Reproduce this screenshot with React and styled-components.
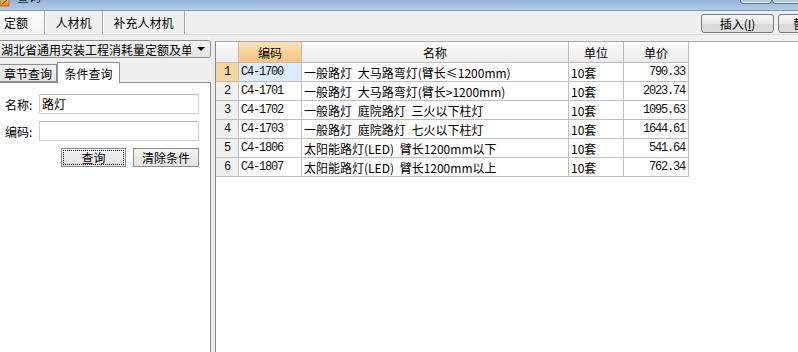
import React from "react";
import styled, { createGlobalStyle } from "styled-components";

const Global = createGlobalStyle`
  html, body { margin: 0; padding: 0; background: #f0f0f0; }
  body { font-family: "Noto Sans CJK SC", "Liberation Sans", sans-serif; font-size: 12px; color: #000; }
`;

const Window = styled.div`
  width: 798px;
  height: 352px;
  overflow: hidden;
  background: #f0f0f0;
  display: flex;
  flex-direction: column;
`;

const TitleBar = styled.div`
  height: 10px;
  flex: none;
  display: flex;
  align-items: flex-start;
  overflow: hidden;
  background: linear-gradient(to bottom, #93b1d6, #b7cde8);
  border-bottom: 1px solid #7b98bf;
`;

const TitleIcon = styled.svg`
  width: 10px;
  height: 7px;
  flex: none;
`;

const TitleText = styled.span`
  margin-left: 7px;
  margin-top: -10px;
  font-size: 12px;
  line-height: 14px;
  color: #1b2a40;
`;

const WinButtons = styled.div`
  margin-left: auto;
  margin-right: -10px;
  display: flex;
`;

const WinButton = styled.div`
  width: ${(p) => p.$w}px;
  height: 3px;
  border: 1px solid #5f7797;
  border-top: none;
  border-radius: 0 0 4px 4px;
  background: linear-gradient(to bottom, #a9c2e2, #c9daee);
  box-shadow: inset 0 -1px 0 rgba(255,255,255,0.6);
`;

const TopBar = styled.div`
  height: 23px;
  flex: none;
  display: flex;
  align-items: stretch;
  border-bottom: 1px solid #dadada;
`;

const Tab = styled.div`
  display: flex;
  align-items: center;
  justify-content: ${(p) => (p.$first ? "flex-start" : "center")};
  width: ${(p) => p.$w}px;
  box-sizing: border-box;
  padding-left: ${(p) => (p.$first ? "4px" : "0")};
  font-size: 12px;
  background: ${(p) => (p.$active ? "linear-gradient(#fdfdfd, #f3f3f3)" : "transparent")};
  border-right: 1px solid #a7a7a7;
  box-shadow: 1px 0 0 #ffffff;
`;

const ToolButtons = styled.div`
  margin-left: auto;
  display: flex;
  align-items: center;
  gap: 4px;
  margin-right: -60px;
  padding-top: 2px;
`;

const ToolButton = styled.button`
  width: ${(p) => p.$w}px;
  height: 19px;
  padding: 0;
  box-sizing: border-box;
  border: 1px solid #7a7a7a;
  border-radius: 3px;
  background: linear-gradient(to bottom, #f6f6f6 0%, #e8e8e8 50%, #d9d9d9 51%, #dedede 100%);
  font-family: "Noto Sans CJK SC", sans-serif;
  font-size: 12px;
  color: #000;
  text-align: ${(p) => (p.$left ? "left" : "center")};
  padding-left: ${(p) => (p.$left ? "14px" : "0")};
`;

const Body = styled.div`
  flex: 1;
  display: flex;
  min-height: 0;
`;

const LeftPane = styled.div`
  width: 211px;
  flex: none;
  display: flex;
  flex-direction: column;
  padding-top: 5px;
  box-sizing: border-box;
`;

const Dropdown = styled.div`
  height: 18px;
  box-sizing: border-box;
  margin-left: -3px;
  border: 1px solid #8e8e8e;
  border-radius: 3px;
  background: linear-gradient(to bottom, #f4f4f4, #e4e4e4);
  display: flex;
  align-items: center;
  padding-left: 3px;
  padding-right: 5px;
  font-size: 12px;
  white-space: nowrap;
`;

const DropText = styled.span`
  flex: 1;
  overflow: hidden;
`;

const Arrow = styled.span`
  width: 0;
  height: 0;
  border-left: 4px solid transparent;
  border-right: 4px solid transparent;
  border-top: 4px solid #000;
  margin-left: 6px;
`;

const SubTabs = styled.div`
  margin-top: 4px;
  height: 20px;
  display: flex;
  align-items: flex-end;
  position: relative;
  z-index: 1;
`;

const SubTab = styled.div`
  width: ${(p) => p.$w}px;
  height: ${(p) => (p.$active ? 21 : 18)}px;
  box-sizing: border-box;
  display: flex;
  align-items: center;
  justify-content: center;
  font-size: 12px;
  border: 1px solid #8f8f8f;
  border-bottom: ${(p) => (p.$active ? "none" : "1px solid #8f8f8f")};
  border-left: ${(p) => (p.$first ? "none" : "1px solid #8f8f8f")};
  margin-bottom: ${(p) => (p.$active ? "-1px" : "0")};
  background: ${(p) => (p.$active ? "#ffffff" : "linear-gradient(#f2f2f2, #e3e3e3)")};
`;

const Panel = styled.div`
  flex: 1;
  background: #ffffff;
  border-top: 1px solid #8f8f8f;
  border-right: 1px solid #8a8a8a;
  box-sizing: border-box;
  display: flex;
  flex-direction: column;
  gap: 7px;
  padding: 11px 11px 0 0;
`;

const FormRow = styled.div`
  display: flex;
  align-items: center;
  height: 20px;
`;

const Label = styled.span`
  width: 39px;
  flex: none;
  box-sizing: border-box;
  padding-left: 5px;
  font-size: 12px;
`;

const Input = styled.div`
  flex: 1;
  height: 20px;
  box-sizing: border-box;
  border: 1px solid #cfcfcf;
  border-top-color: #b8b8b8;
  background: #fff;
  font-size: 12px;
  line-height: 18px;
  padding-left: 2px;
`;

const ButtonRow = styled.div`
  display: flex;
  justify-content: flex-end;
  gap: 7px;
`;

const FormButton = styled.div`
  width: ${(p) => p.$w}px;
  height: 19px;
  box-sizing: border-box;
  border: 1px solid #8d8d8d;
  background: linear-gradient(to bottom, #f5f5f5, #e2e2e2);
  display: flex;
  align-items: center;
  justify-content: center;
  font-size: 12px;
  outline: ${(p) => (p.$focus ? "1px dotted #000" : "none")};
  outline-offset: -3px;
`;

const Splitter = styled.div`
  width: 4px;
  flex: none;
  background: #ececec;
`;

const GridArea = styled.div`
  flex: 1;
  margin-top: 6px;
  background: #ffffff;
  border-left: 1px solid #8a8a8a;
  border-top: 1px solid #a9a9a9;
`;

const cols = "23px 63px 267px 55px 65px";

const GridRow = styled.div`
  display: grid;
  grid-template-columns: ${cols};
  height: ${(p) => (p.$header ? 21 : 19)}px;
  width: 473px;
`;

const Cell = styled.div`
  box-sizing: border-box;
  border-right: 1px solid #bdbdbd;
  border-bottom: 1px solid #bdbdbd;
  display: flex;
  align-items: center;
  justify-content: ${(p) => p.$align || "flex-start"};
  padding: 0 ${(p) => (p.$align === "flex-end" ? "3px" : "0")} 0 ${(p) => (p.$align ? "0" : "2px")};
  font-size: 12px;
  white-space: pre;
  word-spacing: 3px;
  overflow: hidden;
  background: ${(p) => p.$bg || "#ffffff"};
`;

const HeadCell = styled(Cell)`
  justify-content: center;
  padding: 0;
  background: ${(p) =>
    p.$hot
      ? "linear-gradient(to bottom, #fde3b5, #f6c47e)"
      : "linear-gradient(to bottom, #fbfbfb, #ececec)"};
`;

const Mono = styled.span`
  font-family: "Liberation Mono", "DejaVu Sans Mono", monospace;
  font-size: 12px;
  letter-spacing: -1.2px;
  color: #111;
`;

const rows = [
  ["C4-1700", "一般路灯 大马路弯灯(臂长≤1200mm)", "10套", "790.33"],
  ["C4-1701", "一般路灯 大马路弯灯(臂长>1200mm)", "10套", "2023.74"],
  ["C4-1702", "一般路灯 庭院路灯 三火以下柱灯", "10套", "1095.63"],
  ["C4-1703", "一般路灯 庭院路灯 七火以下柱灯", "10套", "1644.61"],
  ["C4-1806", "太阳能路灯(LED) 臂长1200mm以下", "10套", "541.64"],
  ["C4-1807", "太阳能路灯(LED) 臂长1200mm以上", "10套", "762.34"],
];

export default function App() {
  return (
    <Window>
      <Global />
      <TitleBar>
        <TitleIcon viewBox="0 0 10 7">
          <defs>
            <linearGradient id="ti" x1="0" y1="0" x2="0" y2="1">
              <stop offset="0" stopColor="#f7d36b" />
              <stop offset="1" stopColor="#e08a1e" />
            </linearGradient>
          </defs>
          <rect x="0" y="-3" width="9" height="9" fill="url(#ti)" stroke="#b8651a" strokeWidth="0.8" />
          <path d="M2 4 L7 0" stroke="#8a3d0a" strokeWidth="1" />
        </TitleIcon>
        <TitleText>查询</TitleText>
        <WinButtons>
          <WinButton $w={30} />
          <WinButton $w={34} />
        </WinButtons>
      </TitleBar>
      <TopBar>
        <Tab $w={45} $first $active>定额</Tab>
        <Tab $w={58}>人材机</Tab>
        <Tab $w={82}>补充人材机</Tab>
        <ToolButtons>
          <ToolButton $w={73}>插入(<u>I</u>)</ToolButton>
          <ToolButton $w={80} $left>替换(<u>R</u>)</ToolButton>
        </ToolButtons>
      </TopBar>
      <Body>
        <LeftPane>
          <Dropdown>
            <DropText>湖北省通用安装工程消耗量定额及单位估价表</DropText>
            <Arrow />
          </Dropdown>
          <SubTabs>
            <SubTab $w={57} $first>章节查询</SubTab>
            <SubTab $w={63} $active>条件查询</SubTab>
          </SubTabs>
          <Panel>
            <FormRow>
              <Label>名称:</Label>
              <Input>路灯</Input>
            </FormRow>
            <FormRow>
              <Label>编码:</Label>
              <Input />
            </FormRow>
            <ButtonRow>
              <FormButton $w={65} $focus>查询</FormButton>
              <FormButton $w={66}>清除条件</FormButton>
            </ButtonRow>
          </Panel>
        </LeftPane>
        <Splitter />
        <GridArea>
          <GridRow $header>
            <HeadCell />
            <HeadCell $hot>编码</HeadCell>
            <HeadCell>名称</HeadCell>
            <HeadCell>单位</HeadCell>
            <HeadCell>单价</HeadCell>
          </GridRow>
          {rows.map((r, i) => (
            <GridRow key={r[0]}>
              <Cell $align="center" $bg={i === 0 ? "#f8d49f" : "#f0f0f0"}>
                <Mono>{i + 1}</Mono>
              </Cell>
              <Cell $bg={i === 0 ? "#dcebfb" : undefined}>
                <Mono>{r[0]}</Mono>
              </Cell>
              <Cell>{r[1]}</Cell>
              <Cell>{r[2]}</Cell>
              <Cell $align="flex-end">
                <Mono>{r[3]}</Mono>
              </Cell>
            </GridRow>
          ))}
        </GridArea>
      </Body>
    </Window>
  );
}
